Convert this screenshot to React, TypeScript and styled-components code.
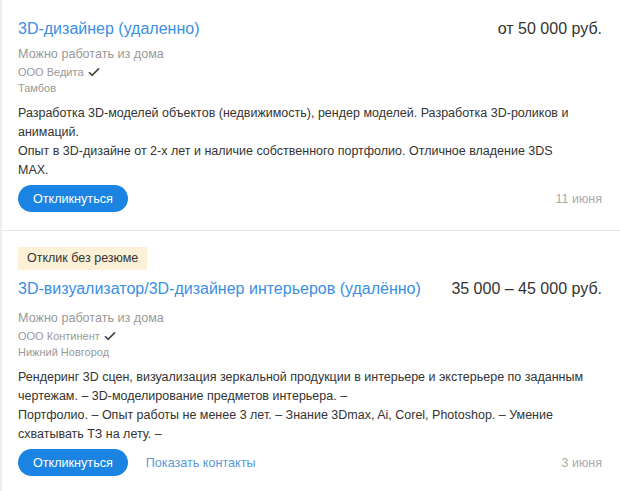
import React from "react"
import styled, { createGlobalStyle } from "styled-components"

const GlobalStyle = createGlobalStyle`
    html, body {
        margin: 0;
        padding: 0;
        background: #fff;
    }
    body {
        font-family: "Liberation Sans", Arial, sans-serif;
        color: #333;
    }
`

const List = styled.div`
    width: 620px;
    border-left: 2px solid #ededed;
    box-sizing: border-box;
`

const Card = styled.div<{ $first?: boolean }>`
    padding: ${p => (p.$first ? "17px" : "16px")} 18px 18px 16px;
    border-top: ${p => (p.$first ? "none" : "1px solid #e8e8e8")};
    display: flex;
    flex-direction: column;
`

const Badge = styled.span`
    align-self: flex-start;
    background: #fcf1d6;
    color: #333;
    font-size: 12.5px;
    line-height: 23px;
    padding: 0 9px;
    margin-bottom: 7px;
`

const Header = styled.div`
    display: flex;
    justify-content: space-between;
    align-items: baseline;
    gap: 20px;
`

const Title = styled.a`
    font-size: 16px;
    line-height: 24px;
    color: #3a8fe3;
    text-decoration: none;
    white-space: nowrap;
`

const Salary = styled.div`
    font-size: 16px;
    line-height: 24px;
    color: #333;
    white-space: nowrap;
`

const Remote = styled.div<{ $badge?: boolean }>`
    margin-top: ${p => (p.$badge ? "8px" : "4px")};
    font-size: 12.6px;
    line-height: 18px;
    color: #999;
`

const Company = styled.div`
    margin-top: 1px;
    font-size: 11px;
    line-height: 16px;
    color: #999;
    display: flex;
    align-items: center;
    gap: 4px;
`

const City = styled.div`
    font-size: 11px;
    line-height: 16px;
    color: #999;
`

const Description = styled.p`
    margin: 8px 0 0;
    max-width: 566px;
    font-size: 12.5px;
    line-height: 19px;
    color: #333;
`

const Footer = styled.div`
    margin-top: 5px;
    display: flex;
    align-items: center;
`

const RespondButton = styled.button`
    height: 27px;
    padding: 0 15px;
    border: none;
    border-radius: 14px;
    background: #1b84e2;
    color: #fff;
    font-family: inherit;
    font-size: 12.6px;
    cursor: pointer;
`

const ContactsLink = styled.a`
    margin-left: 18px;
    font-size: 12.6px;
    color: #5a9ad8;
    text-decoration: none;
`

const Date = styled.span`
    margin-left: auto;
    font-size: 12.5px;
    color: #aaa;
`

const Check = () => (
    <svg width="12" height="10" viewBox="0 0 12 10">
        <path d="M1 5.2 L4.2 8.4 L11 1.4" fill="none" stroke="#444" strokeWidth="1.6" />
    </svg>
)

type Vacancy = {
    badge?: string
    title: string
    salary: string
    company: string
    city: string
    text: React.ReactNode
    date: string
    contacts?: boolean
}

const vacancies: Vacancy[] = [
    {
        title: "3D-дизайнер (удаленно)",
        salary: "от 50 000 руб.",
        company: "ООО Ведита",
        city: "Тамбов",
        text: (
            <>
                Разработка 3D-моделей объектов (недвижимость), рендер моделей. Разработка 3D-роликов и анимаций.
                <br />
                Опыт в 3D-дизайне от 2-х лет и наличие собственного портфолио. Отличное владение 3DS MAX.
            </>
        ),
        date: "11 июня",
    },
    {
        badge: "Отклик без резюме",
        title: "3D-визуализатор/3D-дизайнер интерьеров (удалённо)",
        salary: "35 000 – 45 000 руб.",
        company: "ООО Континент",
        city: "Нижний Новгород",
        text: (
            <>
                Рендеринг 3D сцен, визуализация зеркальной продукции в интерьере и экстерьере по заданным чертежам. – 3D-моделирование предметов интерьера. –
                <br />
                Портфолио. – Опыт работы не менее 3 лет. – Знание 3Dmax, Ai, Corel, Photoshop. – Умение схватывать ТЗ на лету. –
            </>
        ),
        date: "3 июня",
        contacts: true,
    },
]

export default function App() {
    return (
        <>
            <GlobalStyle />
            <List>
                {vacancies.map((v, i) => (
                    <Card key={i} $first={i === 0}>
                        {v.badge && <Badge>{v.badge}</Badge>}
                        <Header>
                            <Title href="#">{v.title}</Title>
                            <Salary>{v.salary}</Salary>
                        </Header>
                        <Remote $badge={!!v.badge}>Можно работать из дома</Remote>
                        <Company>
                            {v.company} <Check />
                        </Company>
                        <City>{v.city}</City>
                        <Description>{v.text}</Description>
                        <Footer>
                            <RespondButton>Откликнуться</RespondButton>
                            {v.contacts && <ContactsLink href="#">Показать контакты</ContactsLink>}
                            <Date>{v.date}</Date>
                        </Footer>
                    </Card>
                ))}
            </List>
        </>
    )
}
